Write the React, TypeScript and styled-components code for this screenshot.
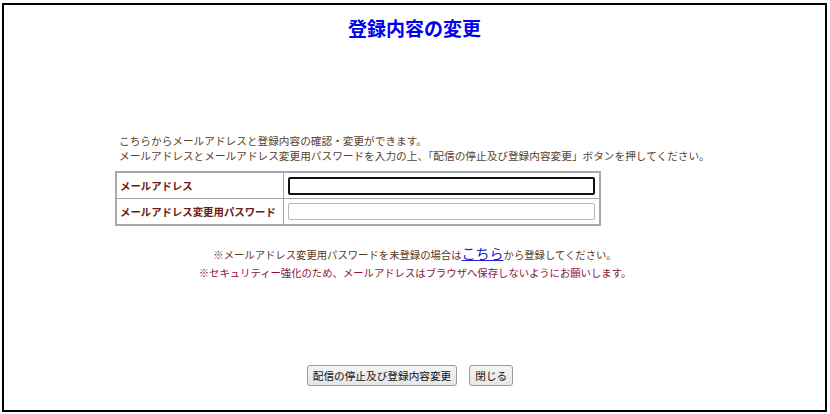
import styled, { createGlobalStyle } from 'styled-components';

const GlobalStyle = createGlobalStyle`
  html, body {
    margin: 0;
    padding: 0;
    background: #fff;
  }
  body {
    font-family: "Noto Sans CJK JP", "Noto Sans", sans-serif;
  }
`;

const Frame = styled.div`
  box-sizing: border-box;
  margin: 3px 0 0 2px;
  width: 825px;
  height: 409px;
  border: 2px solid #000;
  display: flex;
  flex-direction: column;
  align-items: center;
`;

const Title = styled.h1`
  margin: 11px 0 0;
  font-size: 19px;
  line-height: 24px;
  font-weight: bold;
  color: #0000ee;
`;

const Content = styled.div`
  width: 600px;
  margin: 93px 0 0 1px;
  display: flex;
  flex-direction: column;
`;

const Intro = styled.p`
  margin: 0 0 0 4px;
  font-size: 10.67px;
  line-height: 15px;
  color: #5a3f2a;
`;

const Form = styled.table`
  margin-top: 8px;
  width: 486px;
  border-collapse: collapse;
  border: 2px solid #a8a8a8;
`;

const Label = styled.th`
  width: 163px;
  height: 25px;
  padding: 0 0 0 3px;
  text-align: left;
  font-size: 10.4px;
  font-weight: bold;
  color: #6b1a10;
  border: 1px solid #a8a8a8;
  white-space: nowrap;
`;

const Cell = styled.td`
  padding: 0 3px 0 4px;
  border: 1px solid #a8a8a8;
`;

const Field = styled.input<{ $focused?: boolean }>`
  box-sizing: border-box;
  display: block;
  width: 307px;
  height: ${p => (p.$focused ? '18px' : '17px')};
  margin: 0;
  padding: 0 2px;
  border: ${p => (p.$focused ? '2px solid #111' : '1px solid #b5b5b5')};
  border-radius: 2px;
  outline: none;
  background: #fff;
`;

const Notes = styled.div`
  margin-top: 18px;
  display: flex;
  flex-direction: column;
  align-items: center;
  font-size: 10.35px;
  line-height: 18px;
`;

const Note = styled.div<{ $tone: string }>`
  color: ${p => p.$tone};
  white-space: nowrap;
`;

const Here = styled.a`
  font-size: 14px;
  color: #2222cc;
  text-decoration: underline;
`;

const Buttons = styled.div`
  margin-top: 83px;
  padding-right: 10px;
  display: flex;
  justify-content: center;
  gap: 12px;
`;

const Button = styled.button`
  height: 21px;
  padding: 0 5px;
  font-family: "Noto Sans CJK JP", "Noto Sans", sans-serif;
  font-size: 10.67px;
  color: #111;
  background: linear-gradient(#f4f4f4, #e6e6e6);
  border: 1px solid #9a9a9a;
  border-radius: 3px;
`;

export default function App() {
  return (
    <>
      <GlobalStyle />
      <Frame>
        <Title>登録内容の変更</Title>
        <Content>
          <Intro>
            こちらからメールアドレスと登録内容の確認・変更ができます。
            <br />
            メールアドレスとメールアドレス変更用パスワードを入力の上、「配信の停止及び登録内容変更」ボタンを押してください。
          </Intro>
          <Form>
            <tbody>
              <tr>
                <Label>メールアドレス</Label>
                <Cell>
                  <Field $focused type="text" />
                </Cell>
              </tr>
              <tr>
                <Label>メールアドレス変更用パスワード</Label>
                <Cell>
                  <Field type="password" />
                </Cell>
              </tr>
            </tbody>
          </Form>
          <Notes>
            <Note $tone="#5a3a1a">
              ※メールアドレス変更用パスワードを未登録の場合は<Here href="#">こちら</Here>から登録してください。
            </Note>
            <Note $tone="#8a1040">
              ※セキュリティー強化のため、メールアドレスはブラウザへ保存しないようにお願いします。
            </Note>
          </Notes>
          <Buttons>
            <Button>配信の停止及び登録内容変更</Button>
            <Button>閉じる</Button>
          </Buttons>
        </Content>
      </Frame>
    </>
  );
}
